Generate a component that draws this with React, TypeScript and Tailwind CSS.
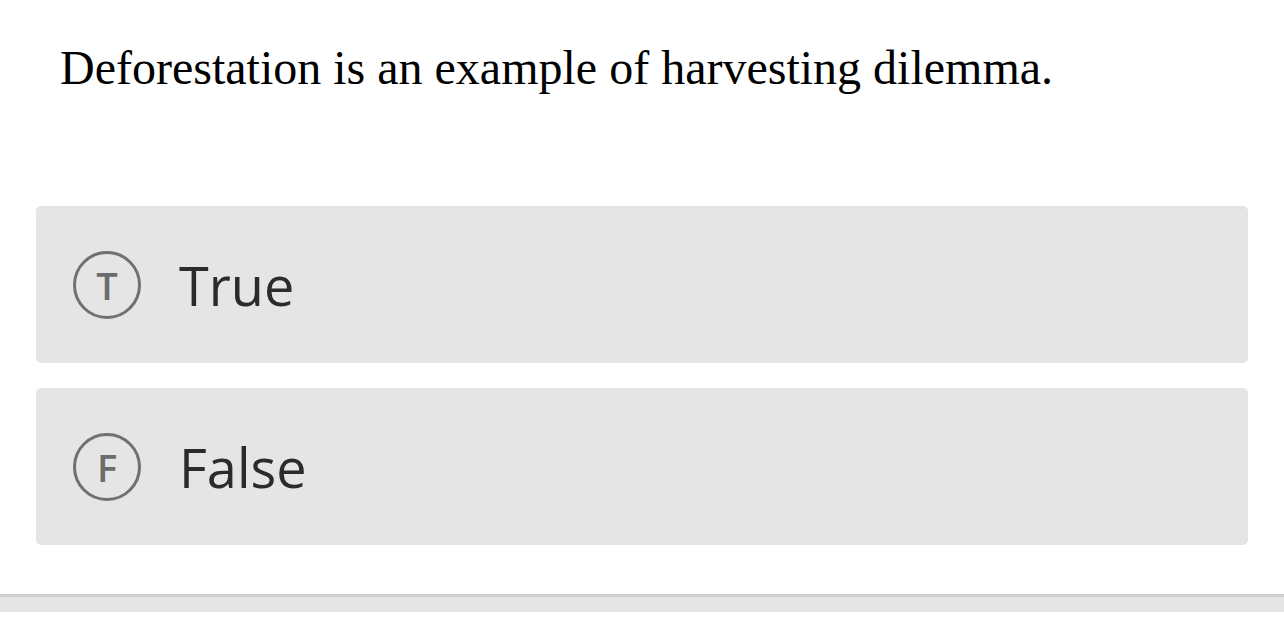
import React from "react";

function Option({ letter, label }: { letter: string; label: string }) {
  return (
    <div className="flex h-[157px] items-center rounded-[5px] bg-[#e5e5e5] pl-[37px]">
      <div className="flex h-[68px] w-[68px] shrink-0 items-center justify-center rounded-full border-[3px] border-[#707070]">
        <span className="font-['Open_Sans',sans-serif] text-[38px] font-semibold leading-none text-[#6b6b6b]">{letter}</span>
      </div>
      <span className="ml-[38px] font-['Open_Sans',sans-serif] text-[54px] leading-none text-[#2b2b2b]">{label}</span>
    </div>
  );
}

export default function App() {
  return (
    <div className="h-[636px] w-[1284px] bg-white">
      <div className="px-[60px] pt-[40px]">
        <h1 className="font-['Liberation_Serif',serif] text-[48px] leading-[55px] text-black">
          Deforestation is an example of harvesting dilemma.
        </h1>
      </div>
      <div className="mt-[111px] flex flex-col gap-[25px] px-[36px]">
        <Option letter="T" label="True" />
        <Option letter="F" label="False" />
      </div>
      <div className="mt-[49px] h-[18px] border-t-[3px] border-[#d0d0d0] bg-[#e5e5e5]" />
    </div>
  );
}
